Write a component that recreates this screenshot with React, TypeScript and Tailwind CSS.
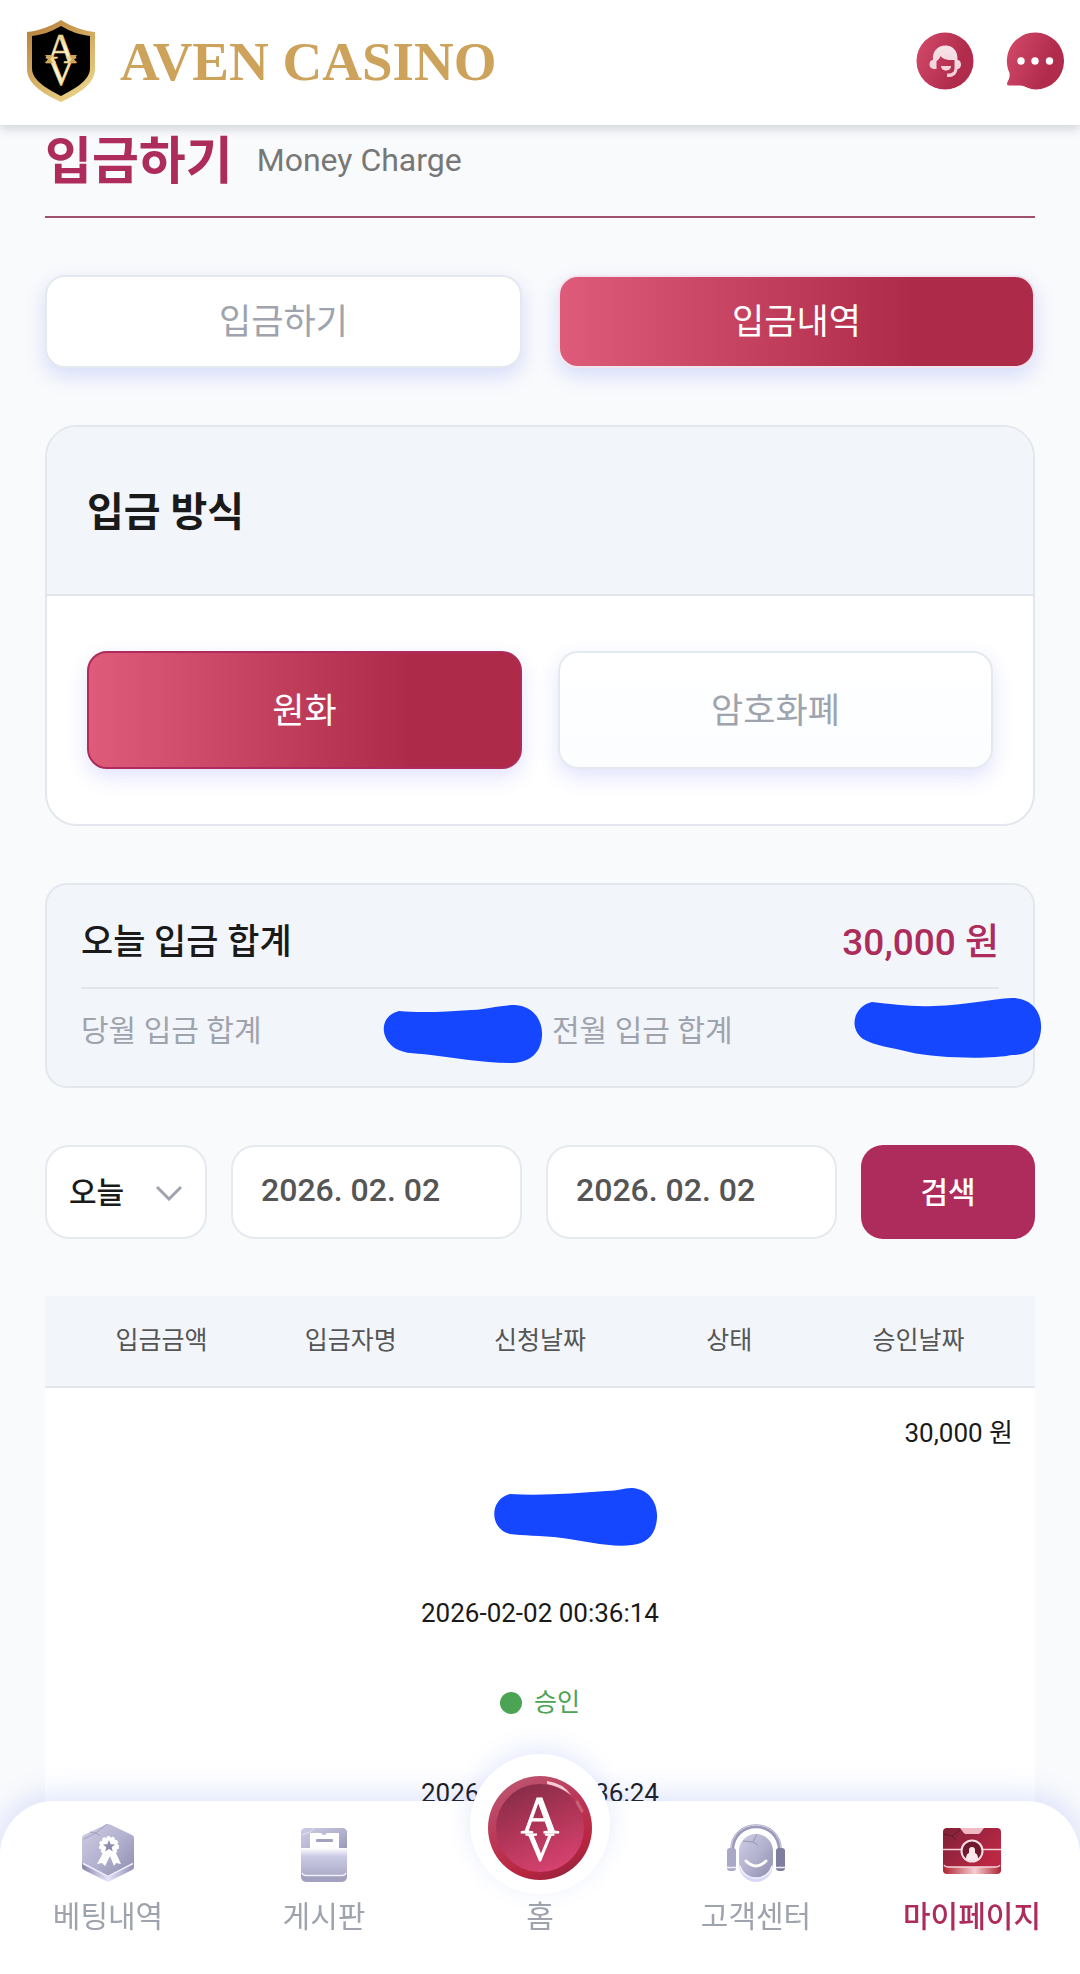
import React, { useState } from "react";

const tabs = ["입금하기", "입금내역"];
const methods = ["원화", "암호화폐"];
const columns = ["입금금액", "입금자명", "신청날짜", "상태", "승인날짜"];

// marker stroke that hides a private value
function Marker({ path, viewBox, className }: { path: string; viewBox: string; className: string }) {
  return (
    <svg viewBox={viewBox} className={className} aria-hidden="true">
      <path d={path} fill="#1447ff" />
    </svg>
  );
}

function ShieldLogo() {
  return (
    <svg viewBox="0 0 70 84" className="h-[84px] w-[70px]" aria-hidden="true">
      <defs>
        <linearGradient id="gold" x1="0" y1="0" x2="0.6" y2="1">
          <stop offset="0" stopColor="#b57a35" />
          <stop offset="0.5" stopColor="#d0a65c" />
          <stop offset="1" stopColor="#e8d084" />
        </linearGradient>
        <linearGradient id="paleGold" x1="0" y1="0" x2="0" y2="1">
          <stop offset="0" stopColor="#e0b565" />
          <stop offset="0.5" stopColor="#fff6cf" />
          <stop offset="1" stopColor="#f3dc98" />
        </linearGradient>
      </defs>
      <path d="M35 1C46 8 58 12 69 13V50C69 66 50 76 35 83C20 76 1 66 1 50V13C12 12 24 8 35 1Z" fill="url(#gold)" />
      <path d="M35 7C45 13 55 16 64 17V49C64 62 48 70 35 77C22 70 6 62 6 49V17C15 16 25 13 35 7Z" fill="#000" />
      <text x="35" y="44" textAnchor="middle" fontSize="42" fontFamily="Liberation Serif, serif" fill="url(#paleGold)" stroke="#f0d48c" strokeWidth="0.600">A</text>
      <text x="35" y="66" textAnchor="middle" fontSize="42" fontFamily="Liberation Serif, serif" fill="url(#paleGold)" stroke="#f0d48c" strokeWidth="0.600">V</text>
      <path d="M19 36H27L24 40L27 44H19L22 40ZM51 36H43L46 40L43 44H51L48 40Z" fill="#d0a65c" />
    </svg>
  );
}

function SupportIcon() {
  return (
    <svg viewBox="0 0 58 58" className="size-[58px]" aria-hidden="true">
      <defs>
        <linearGradient id="rose" x1="0" y1="0.3" x2="1" y2="0.7">
          <stop offset="0" stopColor="#d04767" />
          <stop offset="0.75" stopColor="#b02b4c" />
        </linearGradient>
        <linearGradient id="hair" x1="0" y1="0" x2="0" y2="1">
          <stop offset="0" stopColor="#f7e4e9" />
          <stop offset="1" stopColor="#f0cdd6" />
        </linearGradient>
      </defs>
      <circle cx="29" cy="29" r="28.5" fill="url(#rose)" />
      <path
        d="M17 28C16 19 22 13.500 29.500 13.500S42 19 41.500 28C43.500 28 45 30 45 32.500S43.500 37 41.500 37C41 42 38 44.500 34 45H31V41.500H34C37 41 38.500 39 38.500 36V28C33 28.500 27 27.500 24.500 24C23.500 27 21.500 28.500 20.500 29V37C16 37.500 13.500 35.500 13.500 32.500S15 28 17 28Z"
        fill="url(#hair)"
      />
      <path d="M25 34H35C35 40 25 40 25 34Z" fill="#f3d5dc" />
    </svg>
  );
}

function ChatIcon() {
  return (
    <svg viewBox="0 0 58 58" className="size-[58px]" aria-hidden="true">
      <path d="M29.500 0.500A28.500 28.500 0 1 1 29.500 57.500C23 57.500 20 54 14 53.500H3C1 53.500 0.500 52 1.500 50C3 47 4 45 3.500 41A28.500 28.500 0 0 1 29.500 0.500Z" fill="url(#rose)" />
      <circle cx="15" cy="29" r="3.700" fill="#fff" />
      <circle cx="29" cy="29" r="3.700" fill="#fff" />
      <circle cx="43.500" cy="29" r="3.700" fill="#fff" />
    </svg>
  );
}

function BettingIcon() {
  return (
    <svg viewBox="0 0 60 60" className="size-[60px]" aria-hidden="true">
      <defs>
        <linearGradient id="lilac" x1="0" y1="0" x2="1" y2="1">
          <stop offset="0" stopColor="#cfcde4" />
          <stop offset="0.5" stopColor="#b3b2cf" />
          <stop offset="1" stopColor="#8e8cad" />
        </linearGradient>
        <linearGradient id="lilacEdge" x1="0" y1="0" x2="1" y2="0">
          <stop offset="0" stopColor="#8583a4" />
          <stop offset="0.5" stopColor="#e6e4fb" />
          <stop offset="1" stopColor="#918fae" />
        </linearGradient>
      </defs>
      <path d="M4 38L30 50L56 38V44Q56 46 54 47L32 58Q30 59 28 58L6 47Q4 46 4 44Z" fill="url(#lilacEdge)" />
      <path d="M28 1.500Q30 0.500 32 1.500L54 12Q56 13 56 15V39Q56 41 54 42L32 53Q30 54 28 53L6 42Q4 41 4 39V15Q4 13 6 12Z" fill="url(#lilac)" />
      <path d="M5 40.500L30 53.500L55 40.500" fill="none" stroke="#efedff" strokeWidth="1.500" />
      <path d="M6 16L18 10L29 1M12 9L18 10L22 13" fill="none" stroke="#a3a1c0" strokeWidth="1" />
      <path d="M26 28L19 41L24 40L27 43L32 33L36 43L38 40L43 41L37 28Z" fill="#fff" />
      <circle cx="31" cy="23" r="9" fill="#fff" stroke="#fff" strokeWidth="2" strokeDasharray="3 2" />
      <path d="M31 17L32.700 21.200L37 21.400L33.700 24.200L34.800 28.500L31 26.100L27.200 28.500L28.300 24.200L25 21.400L29.300 21.200Z" fill="#8f8dad" />
    </svg>
  );
}

function BoardIcon() {
  return (
    <svg viewBox="0 0 60 60" className="size-[60px]" aria-hidden="true">
      <defs>
        <linearGradient id="boardFront" x1="0" y1="0" x2="0" y2="1">
          <stop offset="0" stopColor="#fff" />
          <stop offset="0.3" stopColor="#cccbe5" />
          <stop offset="1" stopColor="#aeadca" />
        </linearGradient>
      </defs>
      <rect x="7" y="5" width="46" height="54" rx="5" fill="#a3a1c0" />
      <rect x="7" y="5" width="46" height="30" rx="5" fill="url(#lilac)" />
      <path d="M16 10H27Q30 14 33 10H45V30H16Z" fill="#fff" />
      <rect x="22" y="16" width="17" height="3" rx="1" fill="#a3a1c0" />
      <path d="M7 25H53V48Q53 52 49 52H11Q7 52 7 48Z" fill="url(#boardFront)" />
      <path d="M8 50Q9 52.500 12 52.500H48Q51 52.500 52 50" fill="none" stroke="#f1f0ff" strokeWidth="1.500" />
      <path d="M8 12L16 9L20 5" fill="none" stroke="#e3e2f2" strokeWidth="1" />
    </svg>
  );
}

function HomeIcon() {
  return (
    <svg viewBox="0 0 106 106" className="size-[106px]" aria-hidden="true">
      <defs>
        <linearGradient id="coinRim" x1="0.2" y1="0" x2="0.7" y2="1">
          <stop offset="0" stopColor="#bd5873" />
          <stop offset="0.4" stopColor="#bb3a59" />
          <stop offset="0.8" stopColor="#b9253f" />
          <stop offset="1" stopColor="#98233f" />
        </linearGradient>
        <linearGradient id="coinFace" x1="0.2" y1="0" x2="0.6" y2="1">
          <stop offset="0" stopColor="#842c47" />
          <stop offset="0.5" stopColor="#b03557" />
          <stop offset="1" stopColor="#d64270" />
        </linearGradient>
      </defs>
      <circle cx="53" cy="53" r="52" fill="url(#coinRim)" />
      <circle cx="53" cy="53" r="44" fill="url(#coinFace)" />
      <path d="M60 6Q76 8 84 20Q74 12 60 9Z" fill="#f5cbd5" />
      <path d="M90 27L95 36" stroke="#cb6079" strokeWidth="3" strokeLinecap="round" />
      <text x="53" y="58" textAnchor="middle" fontSize="53" fontFamily="Liberation Serif, serif" fill="#fff" stroke="#fff" strokeWidth="1">A</text>
      <text x="53" y="85" textAnchor="middle" fontSize="40" fontFamily="Liberation Serif, serif" fill="#fff" stroke="#fff" strokeWidth="1">V</text>
    </svg>
  );
}

function CenterIcon() {
  return (
    <svg viewBox="0 0 60 60" className="size-[60px]" aria-hidden="true">
      <path d="M6 28C6 -5 54 -5 54 28" fill="none" stroke="#9c9aba" strokeWidth="4" />
      <path d="M5 27C6 -6 54 -6 55 27" fill="none" stroke="#d6d5ea" strokeWidth="1" />
      <rect x="13" y="18" width="34" height="41" rx="17" fill="#d9d8fa" />
      <rect x="13" y="11" width="34" height="44" rx="17" fill="url(#lilac)" />
      <path d="M14 43C18 59 42 59 46 43" fill="none" stroke="#f3f2ff" strokeWidth="1.500" />
      <path d="M20 38Q30 48 40 38" fill="none" stroke="#fff" strokeWidth="3" strokeLinecap="round" />
      <path d="M17 18L27 19L31 11M27 19L32 22" fill="none" stroke="#9795b4" strokeWidth="1" />
      <rect x="1" y="25" width="9" height="23" rx="3" fill="#aaa8c7" />
      <rect x="50" y="25" width="9" height="23" rx="3" fill="#807e9f" />
      <path d="M1 44.500H10M50 44.500H59" stroke="#efeefc" strokeWidth="1.500" />
    </svg>
  );
}

function MyPageIcon() {
  return (
    <svg viewBox="0 0 60 60" className="size-[60px]" aria-hidden="true">
      <defs>
        <linearGradient id="caseFace" x1="0" y1="0" x2="1" y2="0.6">
          <stop offset="0" stopColor="#7e2137" />
          <stop offset="0.5" stopColor="#9e2440" />
          <stop offset="1" stopColor="#bd2743" />
        </linearGradient>
        <linearGradient id="caseEdge" x1="0" y1="0" x2="1" y2="0">
          <stop offset="0" stopColor="#ad2231" />
          <stop offset="0.55" stopColor="#f6cdd0" />
          <stop offset="1" stopColor="#ad2231" />
        </linearGradient>
      </defs>
      <rect x="1" y="30" width="58" height="21" rx="4" fill="url(#caseEdge)" />
      <rect x="1" y="5" width="58" height="39" rx="4" fill="url(#caseFace)" />
      <path d="M2 42Q3 44 6 44H54Q57 44 58 42" fill="none" stroke="#f7d3db" strokeWidth="1.500" />
      <path d="M18 5H42L39 9Q38 11 36 11H24Q22 11 21 9Z" fill="#efb9c5" />
      <path d="M1 26.500H59" stroke="#f4cdd6" strokeWidth="1.500" />
      <circle cx="30" cy="28" r="10.500" fill="#701a2e" stroke="#f8dfe5" strokeWidth="2" />
      <path d="M24 36Q24 31 27 30V27Q27 24 30 24T33 27V30Q36 31 36 36Q30 40 24 36Z" fill="#fbe9ed" />
      <path d="M2 11L10 13L18 7M10 13L14 17" fill="none" stroke="#641829" strokeWidth="1" />
    </svg>
  );
}

const navItems = [
  { label: "베팅내역", icon: <BettingIcon /> },
  { label: "게시판", icon: <BoardIcon /> },
  { label: "홈", icon: null },
  { label: "고객센터", icon: <CenterIcon /> },
  { label: "마이페이지", icon: <MyPageIcon /> },
];

export default function App() {
  const [tab, setTab] = useState("입금내역");
  const [method, setMethod] = useState("원화");
  const [from, setFrom] = useState("2026. 02. 02");
  const [to, setTo] = useState("2026. 02. 02");

  return (
    <div className="min-h-screen bg-[#f9fafc] font-[Roboto,'Noto_Sans_CJK_KR',sans-serif] text-[#1a1a1a]">
      {/* Header */}
      <header className="sticky top-0 z-20 flex h-[125px] items-center justify-between bg-white pr-4 pb-1 pl-[26px] shadow-[0_5px_8px_rgba(60,70,90,0.18)]">
        <a href="#" className="flex items-center gap-6">
          <ShieldLogo />
          <span className="pt-1 font-['Liberation_Serif',serif] text-[55px] font-bold text-[#cda35b]">AVEN CASINO</span>
        </a>
        <div className="flex gap-8">
          <button type="button" aria-label="고객센터">
            <SupportIcon />
          </button>
          <button type="button" aria-label="채팅">
            <ChatIcon />
          </button>
        </div>
      </header>

      <main className="flex flex-col gap-[57px] px-[45px] pt-[5px]">
        {/* Page title */}
        <div className="flex items-start gap-6 border-b-2 border-[#a0506f] pb-[22px]">
          <h1 className="text-[51px] leading-[64px] font-bold text-[#ae2c5b]">입금하기</h1>
          <span className="text-[32px] leading-[60px] text-[#777]">Money Charge</span>
        </div>

        {/* Tabs */}
        <div className="grid grid-cols-2 gap-9">
          {tabs.map((name) => (
            <button
              key={name}
              type="button"
              onClick={() => setTab(name)}
              className={
                tab === name
                  ? "h-[93px] rounded-[20px] border-2 border-[#f3e3ee] bg-linear-to-r from-[#df5b7a] to-[#ad2a48] to-75% bg-origin-border pt-1 text-[35px] text-white shadow-[0_8px_20px_rgba(90,120,240,0.22)]"
                  : "h-[93px] rounded-[20px] border-2 border-[#e4e8ef] bg-white pt-1 text-[35px] text-[#9ea3ad] shadow-[0_8px_20px_rgba(90,120,240,0.22)]"
              }
            >
              {name}
            </button>
          ))}
        </div>

        {/* Deposit method */}
        <section className="overflow-hidden rounded-[32px] border-2 border-[#e3e7ed] bg-white">
          <h2 className="border-b-2 border-[#e3e7ed] bg-[#f2f5fa] px-10 pt-14 pb-[51px] text-[40px] leading-[60px] font-bold">입금 방식</h2>
          <div className="grid grid-cols-2 gap-9 px-10 py-[55px]">
            {methods.map((name) => (
              <button
                key={name}
                type="button"
                onClick={() => setMethod(name)}
                className={
                  method === name
                    ? "h-[118px] rounded-[20px] border-2 border-[#ae2c5b] bg-linear-to-r from-[#df5b7a] to-[#ad2a48] to-75% pt-1 text-[35px] text-white shadow-[0_8px_20px_rgba(90,100,240,0.18)]"
                    : "h-[118px] rounded-[20px] border-2 border-[#e4e8ef] bg-linear-to-b from-white to-[#fbfdff] pt-1 text-[35px] text-[#9ea3ad] shadow-[0_8px_20px_rgba(90,100,240,0.18)]"
                }
              >
                {name}
              </button>
            ))}
          </div>
        </section>

        {/* Totals */}
        <section className="rounded-[22px] border-2 border-[#e3e7ed] bg-[#f2f5fa] px-[34px] pt-[31px] pb-[28px]">
          <div className="flex items-center justify-between border-b-2 border-[#e3e7ed] pb-[17px] text-[35px] leading-[54px] font-medium">
            <span>오늘 입금 합계</span>
            <span className="text-[37px] text-[#ae2c5b]">30,000 원</span>
          </div>
          <div className="grid grid-cols-2 gap-6 pt-[15px] text-[30px] leading-[54px] text-[#9ea3ad]">
            <div className="relative">
              당월 입금 합계
              <Marker
                viewBox="0 0 160 60"
                path="M16 7C35 9 62 8 88 6C108 5 116 1 132 1C150 2 160 16 159 32C158 48 148 58 130 59C98 59 75 54 48 51C30 49 17 50 8 41C-4 29 -1 11 16 7Z"
                className="absolute -right-[15px] top-0 h-[60px] w-[160px]"
              />
            </div>
            <div className="relative">
              전월 입금 합계
              <Marker
                viewBox="0 0 188 62"
                path="M18 5C38 7 55 10 80 9C113 8 137 2 158 1C178 1 188 15 187 32C186 48 178 58 158 58C140 62 85 62 55 55C35 50 21 49 9 42C-6 31 0 9 18 5Z"
                className="absolute -top-[7px] -right-[43px] h-[62px] w-[188px]"
              />
            </div>
          </div>
        </section>

        {/* Search filter */}
        <form className="flex gap-6" onSubmit={(e) => e.preventDefault()}>
          <div className="relative">
            <select
              aria-label="기간"
              className="h-[94px] w-[162px] appearance-none rounded-[24px] border-2 border-[#e6e9ef] bg-white pl-[22px] text-[30px] font-medium"
            >
              <option>오늘</option>
              <option>어제</option>
            </select>
            <svg viewBox="0 0 28 16" className="pointer-events-none absolute top-10 right-6 h-4 w-7" aria-hidden="true">
              <path d="M2 2L14 14L26 2" fill="none" stroke="#9ea3ad" strokeWidth="3" />
            </svg>
          </div>
          <input
            type="text"
            aria-label="시작일"
            value={from}
            onChange={(e) => setFrom(e.target.value)}
            className="h-[94px] min-w-0 flex-1 rounded-[24px] border-2 border-[#e6e9ef] bg-white px-7 pb-1 text-[32px] font-medium text-[#555]"
          />
          <input
            type="text"
            aria-label="종료일"
            value={to}
            onChange={(e) => setTo(e.target.value)}
            className="h-[94px] min-w-0 flex-1 rounded-[24px] border-2 border-[#e6e9ef] bg-white px-7 pb-1 text-[32px] font-medium text-[#555]"
          />
          <button type="submit" className="h-[94px] w-[174px] rounded-[22px] bg-[#ae2c5b] text-[30px] font-medium text-white">
            검색
          </button>
        </form>

        {/* History */}
        <table className="block bg-white text-[26px]">
          <thead className="block border-b-2 border-[#e3e7ed] bg-[#f2f5fa] px-[22px]">
            <tr className="grid grid-cols-5 text-[25px] leading-[90px] text-[#555]">
              {columns.map((name) => (
                <th key={name} className="font-normal">{name}</th>
              ))}
            </tr>
          </thead>
          <tbody className="block">
            <tr className="flex flex-col px-[22px] text-center leading-[90px]">
              <td className="text-right">30,000 원</td>
              <td className="relative h-[90px]">
                <Marker
                  viewBox="0 0 164 60"
                  path="M16 7C50 9 82 6 112 4C126 4 128 1 138 1C155 2 164 16 163 31C162 47 153 57 138 58C118 61 91 54 68 51C46 48 28 49 16 47C-5 42 -5 12 16 7Z"
                  className="absolute top-[9px] left-[427px] h-[60px] w-[164px]"
                />
              </td>
              <td>2026-02-02 00:36:14</td>
              <td className="flex items-center justify-center gap-3 text-[25px] text-[#4ba354]">
                <span className="size-[22px] rounded-full bg-[#4ba354]" />
                승인
              </td>
              <td>2026-02-02 00:36:24</td>
            </tr>
          </tbody>
        </table>
      </main>

      {/* Bottom menu */}
      <nav className="fixed inset-x-0 bottom-0 z-20 grid grid-cols-5 rounded-t-[54px] bg-white pt-[22px] pb-[35px] shadow-[0_-4px_30px_rgba(80,115,240,0.22)]">
        {navItems.map((item) => (
          <a
            key={item.label}
            href="#"
            className={
              item.label === "마이페이지"
                ? "relative flex flex-col items-center gap-[11px] text-[30px] leading-[45px] font-medium text-[#ae2c5b]"
                : "relative flex flex-col items-center gap-[11px] text-[30px] leading-[45px] text-[#9ea3ad]"
            }
          >
            {item.icon ?? (
              <>
                <span className="h-[60px]" />
                <span className="absolute -top-[69px] flex size-[140px] items-center justify-center rounded-full bg-white pt-2 shadow-[0_-6px_24px_rgba(80,115,240,0.15)]">
                  <HomeIcon />
                </span>
              </>
            )}
            <span>{item.label}</span>
          </a>
        ))}
      </nav>
    </div>
  );
}
